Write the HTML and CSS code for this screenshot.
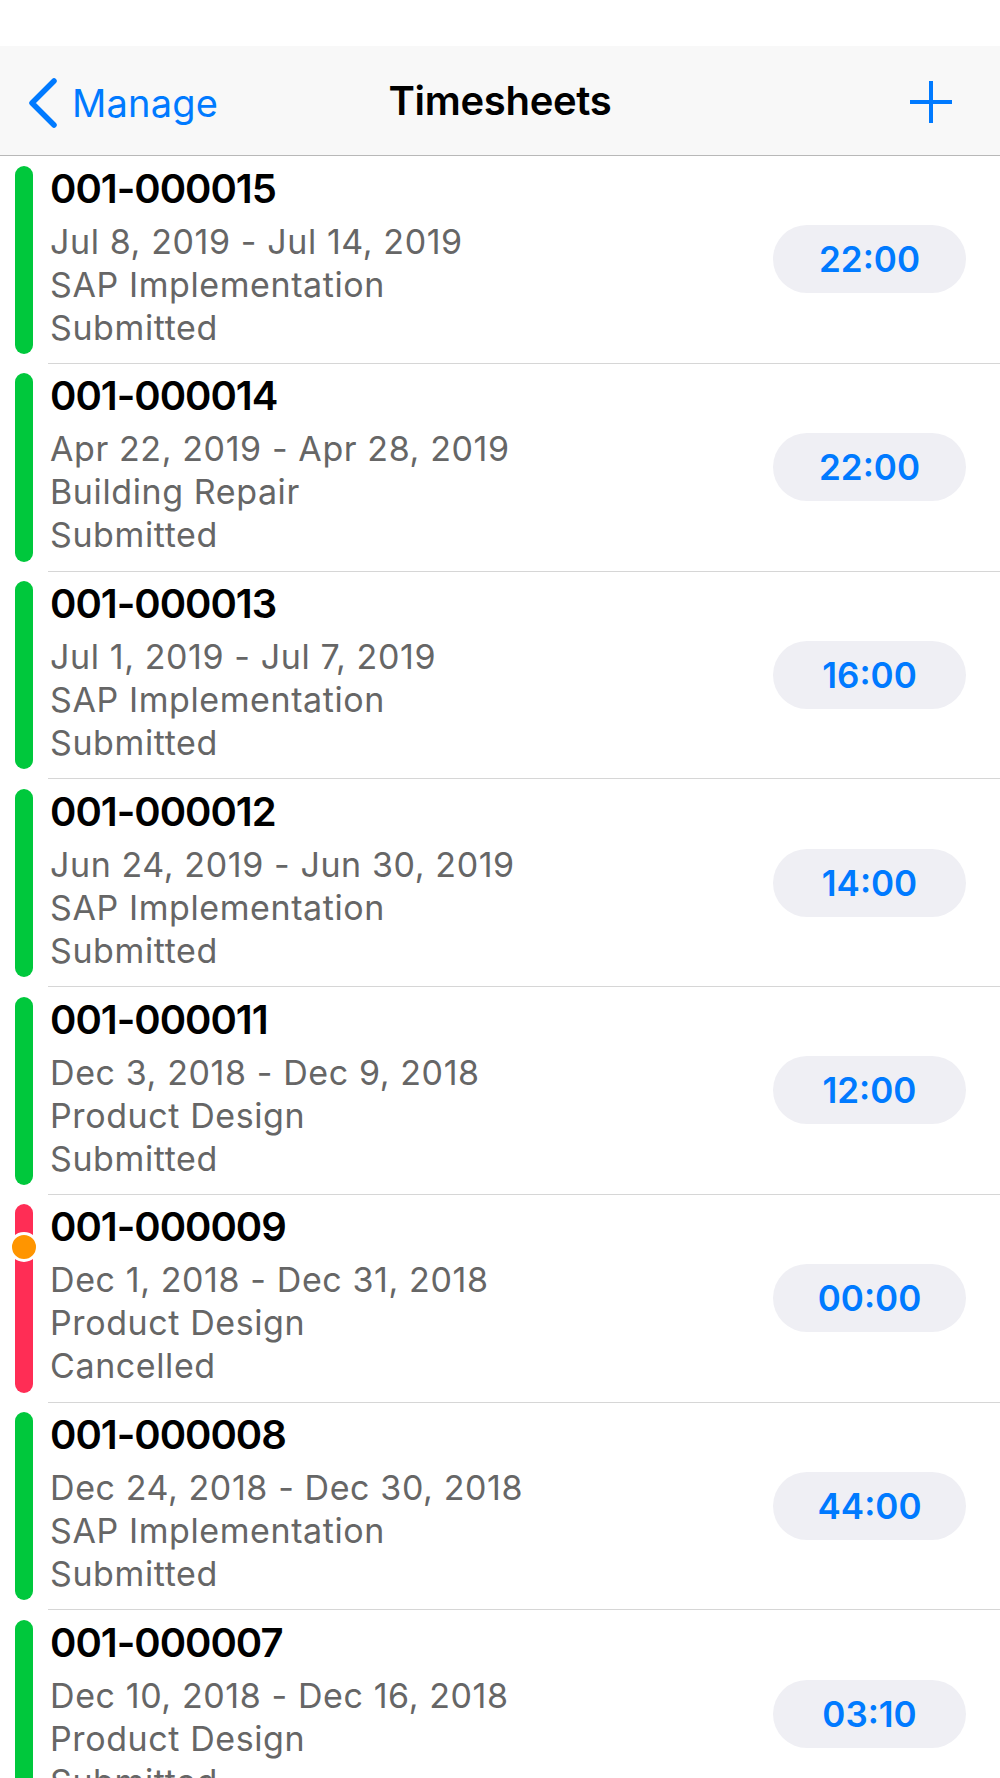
FILE: index.html
```html
<html>
<head>
  <meta charset="UTF-8">
  <meta name="viewport" content="width=device-width, initial-scale=1.0">
  <title>Timesheets</title>
  <link rel="stylesheet" href="styles.css">
</head>
<body>
  <div class="status-bar"></div>

  <header class="nav-bar">
    <a class="nav-back" href="#">
      <svg class="chevron" width="34" height="52" viewBox="0 0 34 52">
        <polyline points="28,4 6,26 28,48" fill="none" stroke="#007aff" stroke-width="5.5" stroke-linecap="round" stroke-linejoin="round"/>
      </svg>
      <span>Manage</span>
    </a>
    <h1 class="nav-title">Timesheets</h1>
    <a class="nav-add" href="#">
      <svg width="42" height="42" viewBox="0 0 42 42">
        <line x1="21" y1="0" x2="21" y2="42" stroke="#007aff" stroke-width="4"/>
        <line x1="0" y1="21" x2="42" y2="21" stroke="#007aff" stroke-width="4"/>
      </svg>
    </a>
  </header>

  <ul class="sheet-list">
    <li class="sheet">
      <div class="sheet-status"><span class="status-bar-mark green"></span></div>
      <div class="sheet-body">
        <div class="sheet-info">
          <div class="sheet-number">001-000015</div>
          <div class="sheet-line">Jul 8, 2019 - Jul 14, 2019</div>
          <div class="sheet-line">SAP Implementation</div>
          <div class="sheet-line">Submitted</div>
        </div>
        <span class="hours">22:00</span>
      </div>
    </li>
    <li class="sheet">
      <div class="sheet-status"><span class="status-bar-mark green"></span></div>
      <div class="sheet-body">
        <div class="sheet-info">
          <div class="sheet-number">001-000014</div>
          <div class="sheet-line">Apr 22, 2019 - Apr 28, 2019</div>
          <div class="sheet-line">Building Repair</div>
          <div class="sheet-line">Submitted</div>
        </div>
        <span class="hours">22:00</span>
      </div>
    </li>
    <li class="sheet">
      <div class="sheet-status"><span class="status-bar-mark green"></span></div>
      <div class="sheet-body">
        <div class="sheet-info">
          <div class="sheet-number">001-000013</div>
          <div class="sheet-line">Jul 1, 2019 - Jul 7, 2019</div>
          <div class="sheet-line">SAP Implementation</div>
          <div class="sheet-line">Submitted</div>
        </div>
        <span class="hours">16:00</span>
      </div>
    </li>
    <li class="sheet">
      <div class="sheet-status"><span class="status-bar-mark green"></span></div>
      <div class="sheet-body">
        <div class="sheet-info">
          <div class="sheet-number">001-000012</div>
          <div class="sheet-line">Jun 24, 2019 - Jun 30, 2019</div>
          <div class="sheet-line">SAP Implementation</div>
          <div class="sheet-line">Submitted</div>
        </div>
        <span class="hours">14:00</span>
      </div>
    </li>
    <li class="sheet">
      <div class="sheet-status"><span class="status-bar-mark green"></span></div>
      <div class="sheet-body">
        <div class="sheet-info">
          <div class="sheet-number">001-000011</div>
          <div class="sheet-line">Dec 3, 2018 - Dec 9, 2018</div>
          <div class="sheet-line">Product Design</div>
          <div class="sheet-line">Submitted</div>
        </div>
        <span class="hours">12:00</span>
      </div>
    </li>
    <li class="sheet">
      <div class="sheet-status">
        <span class="status-bar-mark red"></span>
        <span class="status-dot"></span>
      </div>
      <div class="sheet-body">
        <div class="sheet-info">
          <div class="sheet-number">001-000009</div>
          <div class="sheet-line">Dec 1, 2018 - Dec 31, 2018</div>
          <div class="sheet-line">Product Design</div>
          <div class="sheet-line">Cancelled</div>
        </div>
        <span class="hours">00:00</span>
      </div>
    </li>
    <li class="sheet">
      <div class="sheet-status"><span class="status-bar-mark green"></span></div>
      <div class="sheet-body">
        <div class="sheet-info">
          <div class="sheet-number">001-000008</div>
          <div class="sheet-line">Dec 24, 2018 - Dec 30, 2018</div>
          <div class="sheet-line">SAP Implementation</div>
          <div class="sheet-line">Submitted</div>
        </div>
        <span class="hours">44:00</span>
      </div>
    </li>
    <li class="sheet">
      <div class="sheet-status"><span class="status-bar-mark green"></span></div>
      <div class="sheet-body">
        <div class="sheet-info">
          <div class="sheet-number">001-000007</div>
          <div class="sheet-line">Dec 10, 2018 - Dec 16, 2018</div>
          <div class="sheet-line">Product Design</div>
          <div class="sheet-line">Submitted</div>
        </div>
        <span class="hours">03:10</span>
      </div>
    </li>
  </ul>
</body>
</html>
```

FILE: styles.css
```css
html, body {
    height: 100%;
    overflow: hidden;
}

body {
    margin: 0;
    padding: 0;
    font-family: 'Inter', 'Liberation Sans', sans-serif;
    background-color: #ffffff;
    color: #000000;
}

.status-bar {
    height: 46px;
    background-color: #ffffff;
}

/* Navigation bar */
.nav-bar {
    height: 109px;
    background-color: #f8f8f8;
    border-bottom: 1px solid #b8b8b8;
    display: flex;
    align-items: center;
    justify-content: space-between;
    padding: 0 48px 0 26px;
    position: relative;
}

.nav-back {
    display: flex;
    align-items: center;
    gap: 12px;
    color: #007aff;
    text-decoration: none;
    font-size: 38px;
    letter-spacing: 0.2px;
    margin-top: 4px;
}

.chevron {
    display: block;
}

.nav-title {
    position: absolute;
    left: 0;
    right: 0;
    text-align: center;
    margin: 0;
    font-size: 40px;
    font-weight: 600;
    letter-spacing: -0.3px;
    pointer-events: none;
}

.nav-add {
    display: block;
    margin-top: 2px;
}

.nav-add svg {
    display: block;
}

/* List */
.sheet-list {
    list-style: none;
    margin: 0;
    padding: 0;
}

.sheet {
    display: flex;
    height: 207.75px;
}

.sheet-status {
    width: 48px;
    flex-shrink: 0;
    padding: 9.5px 0 10px 15px;
    box-sizing: border-box;
    display: flex;
    position: relative;
}

.status-bar-mark {
    width: 18px;
    border-radius: 9px;
}

.green {
    background-color: #00c83c;
}

.red {
    background-color: #ff2d55;
}

.status-dot {
    position: absolute;
    left: 9px;
    top: 37px;
    width: 24px;
    height: 24px;
    border-radius: 50%;
    background-color: #ff9500;
    border: 3px solid #ffffff;
}

.sheet-body {
    flex: 1;
    display: flex;
    align-items: center;
    justify-content: space-between;
    border-bottom: 1px solid #d6d6d6;
    padding: 0 34px 0 2px;
}

.sheet-info {
    align-self: flex-start;
    padding-top: 8.5px;
}

.sheet-number {
    font-size: 40px;
    font-weight: 600;
    line-height: 48px;
    letter-spacing: -1px;
    margin-bottom: 7px;
}

.sheet-line {
    font-size: 34px;
    line-height: 43px;
    letter-spacing: 0.6px;
    color: #666666;
}

.hours {
    width: 193px;
    height: 68px;
    border-radius: 34px;
    background-color: #efeff4;
    color: #007aff;
    font-size: 35px;
    font-weight: 600;
    display: flex;
    align-items: center;
    justify-content: center;
}
```
